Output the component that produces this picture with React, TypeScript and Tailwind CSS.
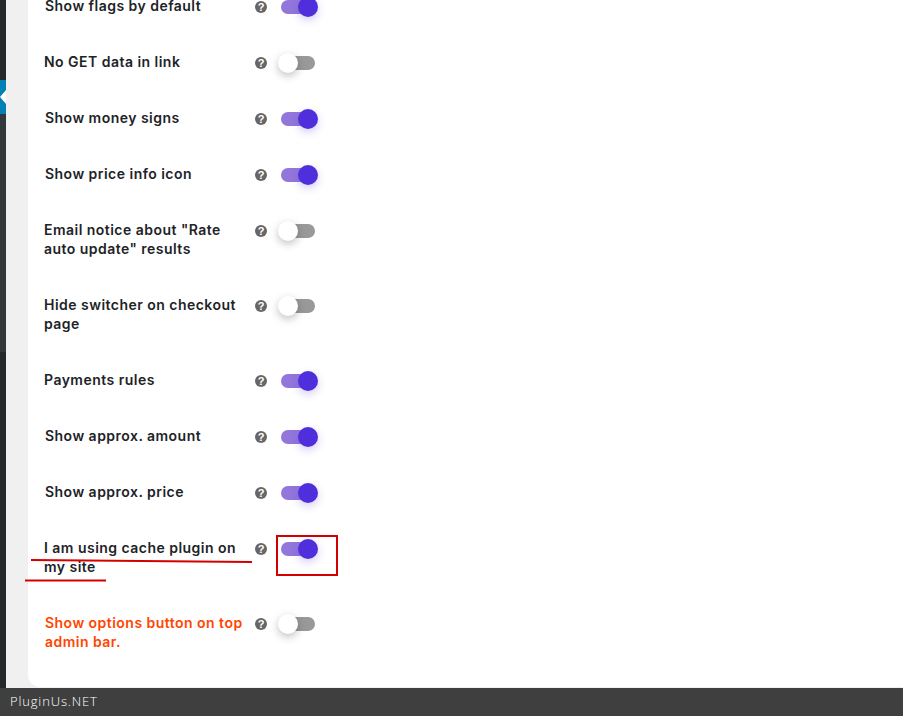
const rows = [
  { label: "Show flags by default", on: true, nudge: true },
  { label: "No GET data in link", on: false },
  { label: "Show money signs", on: true, nudge: true },
  { label: "Show price info icon", on: true, nudge: true },
  { label: 'Email notice about "Rate auto update" results', on: false },
  { label: "Hide switcher on checkout page", on: false },
  { label: "Payments rules", on: true },
  { label: "Show approx. amount", on: true, nudge: true },
  { label: "Show approx. price", on: true, nudge: true },
  { label: "I am using cache plugin on my site", on: true },
  { label: "Show options button on top admin bar.", on: false, orange: true, nudge: true },
];

function Toggle({ on }: { on: boolean }) {
  if (on) {
    return (
      <div className="relative h-[14px] w-[34px] rounded-full bg-[#9276da]">
        <div className="absolute left-[17px] top-[-3px] h-5 w-5 rounded-full bg-[#4f2fdb] shadow-[0_3px_8px_rgba(79,47,219,0.25)]" />
      </div>
    );
  }
  return (
    <div className="relative h-[14px] w-[34px] rounded-full bg-[#999999]">
      <div className="absolute left-[-3px] top-[-3px] h-5 w-5 rounded-full bg-white shadow-[0_3px_8px_rgba(0,0,0,0.25)]" />
    </div>
  );
}

function Help() {
  return (
    <div className="flex h-3 w-3 items-center justify-center rounded-full bg-[#666666] font-['Liberation_Sans',sans-serif] text-[11px] font-bold leading-none text-white">
      ?
    </div>
  );
}

export default function App() {
  return (
    <div className="relative flex h-[716px] flex-col overflow-hidden bg-[#f0f0f1] font-['Inter',sans-serif]">
      <div className="flex min-h-0 flex-1">
        <div className="flex w-[6px] flex-col bg-[#23282d]">
          <div className="h-[80px]" />
          <div className="h-[34px] bg-[#0080b3]" />
          <div className="h-[238px] bg-[#32373c]" />
        </div>
        <div className="ml-[22px] h-[687px] flex-1 rounded-bl-[12px] bg-white">
          <div className="mt-[-3px] flex flex-col">
            {rows.map((row) => (
              <div key={row.label} className="flex items-start pb-[37px] pl-4">
                <div
                  className={`mt-[-1px] mb-px w-[211px] pr-[6px] text-[14px] font-semibold leading-[19px] tracking-[0.47px] ${
                    row.nudge ? "pl-px" : ""
                  } ${row.orange ? "text-[#ff4500]" : "text-[#1d2327]"}`}
                >
                  {row.label}
                </div>
                <div className="flex items-center pt-[3px]">
                  <Help />
                  <div className="ml-[14px]">
                    <Toggle on={row.on} />
                  </div>
                </div>
              </div>
            ))}
          </div>
        </div>
      </div>
      <div className="flex h-7 shrink-0 items-center bg-[#3f3f3f] pl-[10px] font-['Open_Sans',sans-serif] text-[13px] font-light tracking-[0.85px] text-white">
        PluginUs.NET
      </div>
      {/* white chevron on the blue sidebar tab */}
      <div className="absolute left-0 top-[90px] h-0 w-0 border-y-[7px] border-r-[6px] border-y-transparent border-r-white" />
      {/* hand-drawn red marks */}
      <svg className="absolute left-0 top-0" width="903" height="716">
        <path d="M31 560 L252 562" stroke="#d40000" strokeWidth="2" fill="none" />
        <path d="M25 580.5 H106" stroke="#d40000" strokeWidth="2" fill="none" />
        <rect x="277" y="536" width="60" height="39" stroke="#d40000" strokeWidth="2" fill="none" />
      </svg>
    </div>
  );
}
